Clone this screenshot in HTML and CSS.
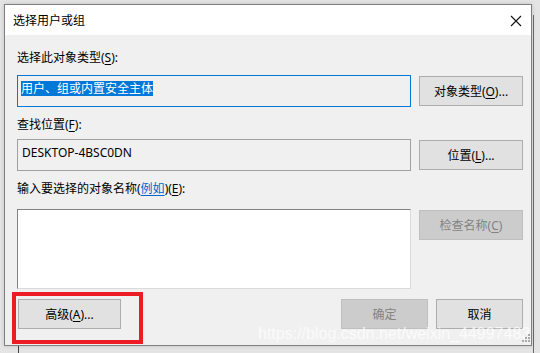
FILE: index.html
```html
<!DOCTYPE html>
<html lang="zh-CN">
<head>
    <meta charset="UTF-8">
    <title>选择用户或组</title>
    <link rel="stylesheet" href="styles.css">
</head>
<body>
    <div class="window">
        <div class="titlebar">
            <span class="title">选择用户或组</span>
            <svg class="close" width="12" height="12" viewBox="0 0 12 12">
                <path d="M1 1L11 11M11 1L1 11" stroke="#111" stroke-width="1.1" fill="none"/>
            </svg>
        </div>
        <div class="content">
            <div class="label">选择此对象类型(<u>S</u>):</div>
            <div class="row">
                <div class="field focus"><span class="sel">用户、组或内置安全主体</span></div>
                <button class="btn">对象类型(<u>O</u>)...</button>
            </div>

            <div class="label label-location">查找位置(<u>F</u>):</div>
            <div class="row">
                <div class="field readonly">DESKTOP-4BSC0DN</div>
                <button class="btn">位置(<u>L</u>)...</button>
            </div>

            <div class="label label-names">输入要选择的对象名称(<a class="link">例如</a>)(<u>E</u>):</div>
            <div class="row">
                <div class="field names"></div>
                <button class="btn disabled">检查名称(<u>C</u>)</button>
            </div>

            <div class="footer">
                <button class="btn advanced">高级(<u>A</u>)...</button>
                <div class="spacer"></div>
                <button class="btn disabled small">确定</button>
                <button class="btn small">取消</button>
            </div>
        </div>

        <div class="highlight"></div>
        <div class="watermark">https://blog.csdn.net/weixin_44997483</div>
        <svg class="grip" width="8" height="8" viewBox="0 0 8 8">
            <rect x="6" y="0" width="2" height="2" fill="#a8a8a8"/>
            <rect x="3" y="3" width="2" height="2" fill="#a8a8a8"/>
            <rect x="6" y="3" width="2" height="2" fill="#a8a8a8"/>
            <rect x="0" y="6" width="2" height="2" fill="#a8a8a8"/>
            <rect x="3" y="6" width="2" height="2" fill="#a8a8a8"/>
            <rect x="6" y="6" width="2" height="2" fill="#a8a8a8"/>
        </svg>
    </div>
</body>
</html>
```

FILE: styles.css
```css
body {
    margin: 0;
    height: 353px;
    overflow: hidden;
    font-family: 'Noto Sans', 'Noto Sans CJK SC', sans-serif;
    font-size: 12px;
    color: #000;
    background:
        linear-gradient(to right, transparent 533px, #6b6b6b 533px, #6b6b6b 534px, transparent 534px) 0 15px / 100% 100% no-repeat,
        linear-gradient(to right, transparent 18px, #444 18px, #444 19px, transparent 19px) 0 346px / 100% 10px no-repeat,
        #e4e4e4;
}
.window {
    position: relative;
    box-sizing: border-box;
    margin: 4px 0 0 4px;
    width: 528px;
    height: 342px;
    border: 1px solid #7f7f7f;
    background-color: #f0f0f0;
    box-shadow: 0 0 4px rgba(0, 0, 0, 0.15);
}
.titlebar {
    height: 30px;
    background-color: #fff;
    display: flex;
    align-items: center;
    justify-content: space-between;
    padding: 0 4px 0 8px;
}
.title {
    font-size: 12px;
    line-height: 16px;
    margin-top: 1px;
}
.close {
    margin-right: 5px;
    margin-top: 1px;
}
.content {
    padding: 15px 8px 0 12px;
}
.label {
    line-height: 16px;
    height: 16px;
    margin-bottom: 9px;
}
.label-location {
    margin-bottom: 6px;
}
.label-names {
    margin-bottom: 12px;
}
.label u, .btn u {
    text-decoration-thickness: 1px;
    text-underline-offset: 2px;
}
.link {
    color: #0066cc;
    text-decoration: underline;
    text-underline-offset: 2px;
}
.row {
    display: flex;
    align-items: flex-start;
    gap: 8px;
    margin-bottom: 10px;
}
.field {
    box-sizing: border-box;
    width: 394px;
    height: 32px;
    border: 1px solid #a0a0a0;
    padding: 4px 3px;
    line-height: 16px;
}
.field.focus {
    border-color: #0078d7;
    background-color: #f0f0f0;
}
.sel {
    background-color: #0078d7;
    color: #fff;
    display: inline-block;
    line-height: 15px;
    margin-top: 1px;
}
.field.readonly {
    padding-left: 4px;
    padding-top: 5px;
}
.field.names {
    height: 80px;
    background-color: #fff;
    border-color: #828282 #dadada #dadada #828282;
}
.btn {
    box-sizing: border-box;
    width: 104px;
    height: 30px;
    margin-top: 1px;
    padding: 0;
    border: 1px solid #adadad;
    background-color: #e1e1e1;
    font-family: inherit;
    font-size: 12px;
    color: #000;
}
.btn.disabled {
    background-color: #cccccc;
    border-color: #bfbfbf;
    color: #838383;
}
.footer {
    display: flex;
    gap: 8px;
    margin-top: 4px;
}
.footer .btn {
    margin-top: 0;
}
.btn.advanced {
    width: 103px;
    margin-left: 1px;
}
.btn.small {
    width: 87px;
}
.spacer {
    flex: 1;
}
.highlight {
    position: absolute;
    left: 7px;
    top: 287px;
    width: 131px;
    height: 52px;
    box-sizing: border-box;
    border: 4px solid #ed1c24;
}
.watermark {
    position: absolute;
    left: 253px;
    top: 319px;
    font-family: 'Liberation Sans', Arial, sans-serif;
    font-size: 16px;
    line-height: 20px;
    color: rgba(255, 255, 255, 0.75);
    white-space: nowrap;
}
.grip {
    position: absolute;
    right: 1px;
    bottom: 3px;
}
```
